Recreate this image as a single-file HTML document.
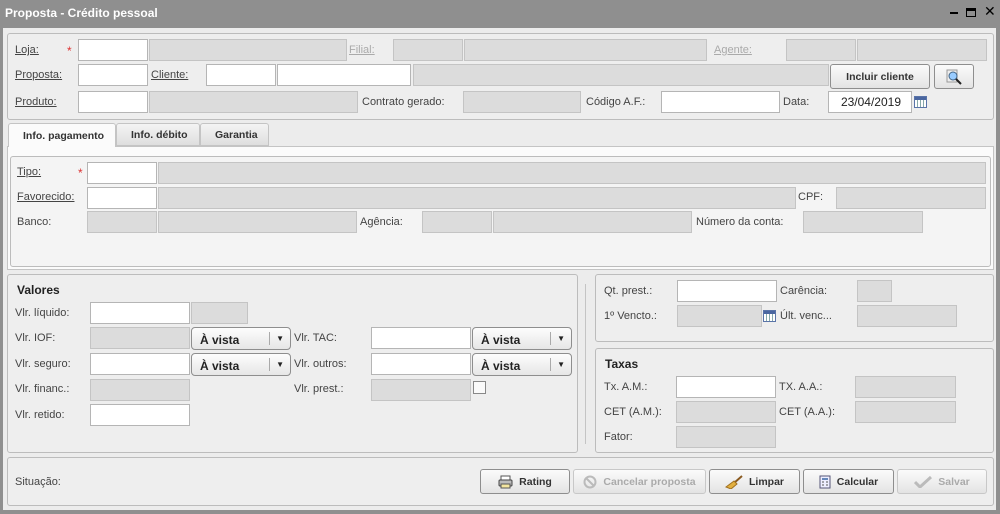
<!DOCTYPE html>
<html><head><meta charset="utf-8"><style>
*{box-sizing:border-box;margin:0;padding:0}
body{width:1000px;height:514px;background:#8f8f8f;font-family:"Liberation Sans",sans-serif;font-size:11px;color:#444;position:relative;overflow:hidden}
.a{position:absolute}
#win{position:absolute;left:3px;top:28px;width:993px;height:482px;background:#ececec}
.pn{position:absolute;border:1px solid #bcbcbc;border-radius:3px;background:#eeeeee}
.w{position:absolute;background:#fff;border:1px solid #b5b5b5;height:22px}
.g{position:absolute;background:#dcdcdc;border:1px solid #c4c4c4;height:22px}
.l{position:absolute;line-height:14px;white-space:nowrap}
.u{text-decoration:underline}
.dis{color:#aaa}
.st{position:absolute;color:#d33;font-size:12px}
.btn{position:absolute;height:25px;border:1px solid #8e8e8e;border-radius:3px;background:linear-gradient(#fbfbfb,#e3e3e3);font-weight:bold;font-size:10.5px;color:#333;display:flex;align-items:center;justify-content:center;gap:6px}
.btn.d{color:#aaa;border-color:#c8c8c8}
.sel{position:absolute;width:100px;height:23px;border:1px solid #8e8e8e;border-radius:4px;background:linear-gradient(#fdfdfd,#e6e6e6);font-weight:bold;font-size:12px;color:#222;padding:5px 8px}
.sel:after{content:"▼";position:absolute;right:6px;top:6px;font-size:8px}
.sel:before{content:"";position:absolute;right:20px;top:4px;height:13px;border-left:1px solid #aaa}
.cal{position:absolute;width:13px;height:12px;border:1px solid #5a74a8;background:repeating-linear-gradient(90deg,#fff 0 2px,#8aa 2px 3px),#fff}
.cal:before{content:"";position:absolute;left:0;top:0;right:0;height:3px;background:#4a66a0}
</style></head><body>
<div class="a" style="left:5px;top:6px;color:#fff;font-weight:bold;font-size:12px">Proposta - Crédito pessoal</div>
<div class="a" style="left:950px;top:12px;width:8px;height:2px;background:#000"></div>
<div class="a" style="left:966px;top:8px;width:10px;height:9px;border:1px solid #000;border-top-width:3px"></div>
<div class="a" style="left:984px;top:3px;font-size:14px;color:#000">✕</div>
<div id="win"></div>

<div class="pn" style="left:7px;top:33px;width:987px;height:87px"></div>
<div class="l u" style="left:15px;top:43px">Loja:</div><div class="st" style="left:67px;top:44px">*</div>
<div class="w" style="left:78px;top:39px;width:70px"></div><div class="g" style="left:149px;top:39px;width:198px"></div>
<div class="l u dis" style="left:349px;top:43px">Filial:</div>
<div class="g" style="left:393px;top:39px;width:70px"></div><div class="g" style="left:464px;top:39px;width:243px"></div>
<div class="l u dis" style="left:714px;top:43px">Agente:</div>
<div class="g" style="left:786px;top:39px;width:70px"></div><div class="g" style="left:857px;top:39px;width:130px"></div>

<div class="l u" style="left:15px;top:68px">Proposta:</div>
<div class="w" style="left:78px;top:64px;width:70px"></div>
<div class="l u" style="left:151px;top:68px">Cliente:</div>
<div class="w" style="left:206px;top:64px;width:70px"></div><div class="w" style="left:277px;top:64px;width:134px"></div>
<div class="g" style="left:413px;top:64px;width:416px"></div>
<div class="btn" style="left:830px;top:64px;width:100px">Incluir cliente</div>
<div class="btn" style="left:934px;top:64px;width:40px"><svg width="16" height="16"><rect x="1" y="1" width="10" height="12" fill="#eee" stroke="#999"/><circle cx="7" cy="7" r="4" fill="#9cf" stroke="#468"/><path d="M10 10l5 5" stroke="#222" stroke-width="2"/></svg></div>

<div class="l u" style="left:15px;top:95px">Produto:</div>
<div class="w" style="left:78px;top:91px;width:70px"></div><div class="g" style="left:149px;top:91px;width:209px"></div>
<div class="l" style="left:362px;top:95px">Contrato gerado:</div>
<div class="g" style="left:463px;top:91px;width:118px"></div>
<div class="l" style="left:586px;top:95px">Código A.F.:</div>
<div class="w" style="left:661px;top:91px;width:119px"></div>
<div class="l" style="left:783px;top:95px">Data:</div>
<div class="w" style="left:828px;top:91px;width:84px;text-align:right;padding:3px 10px 0 0;color:#222;font-size:12px">23/04/2019</div>
<div class="cal" style="left:914px;top:96px"></div>

<div class="a" style="left:7px;top:146px;width:987px;height:124px;background:#fbfbfb;border:1px solid #c4c4c4"></div>
<div class="a" style="left:8px;top:123px;width:108px;height:24px;background:#fbfbfb;border:1px solid #c4c4c4;border-bottom:none;border-radius:3px 3px 0 0;font-weight:bold;font-size:10.5px;color:#333;padding:6px 0 0 14px">Info. pagamento</div>
<div class="a" style="left:116px;top:123px;width:84px;height:23px;background:linear-gradient(#f4f4f4,#dedede);border:1px solid #c4c4c4;border-radius:3px 3px 0 0;font-weight:bold;font-size:10.5px;color:#333;padding:5px 0 0 14px">Info. débito</div>
<div class="a" style="left:200px;top:123px;width:69px;height:23px;background:linear-gradient(#f4f4f4,#dedede);border:1px solid #c4c4c4;border-radius:3px 3px 0 0;font-weight:bold;font-size:10.5px;color:#333;padding:5px 0 0 14px">Garantia</div>
<div class="pn" style="left:10px;top:156px;width:981px;height:111px;background:#f4f4f4"></div>
<div class="l u" style="left:17px;top:165px">Tipo:</div><div class="st" style="left:78px;top:166px">*</div>
<div class="w" style="left:87px;top:162px;width:70px"></div><div class="g" style="left:158px;top:162px;width:828px"></div>
<div class="l u" style="left:17px;top:190px">Favorecido:</div>
<div class="w" style="left:87px;top:187px;width:70px"></div><div class="g" style="left:158px;top:187px;width:638px"></div>
<div class="l" style="left:798px;top:190px">CPF:</div><div class="g" style="left:836px;top:187px;width:150px"></div>
<div class="l" style="left:17px;top:215px">Banco:</div>
<div class="g" style="left:87px;top:211px;width:70px"></div><div class="g" style="left:158px;top:211px;width:199px"></div>
<div class="l" style="left:360px;top:215px">Agência:</div>
<div class="g" style="left:422px;top:211px;width:70px"></div><div class="g" style="left:493px;top:211px;width:199px"></div>
<div class="l" style="left:696px;top:215px">Número da conta:</div><div class="g" style="left:803px;top:211px;width:120px"></div>

<div class="pn" style="left:7px;top:274px;width:571px;height:179px"></div>
<div class="l" style="left:17px;top:283px;font-weight:bold;font-size:12px;color:#222">Valores</div>
<div class="l" style="left:15px;top:306px">Vlr. líquido:</div>
<div class="w" style="left:90px;top:302px;width:100px"></div><div class="g" style="left:191px;top:302px;width:57px"></div>
<div class="l" style="left:15px;top:331px">Vlr. IOF:</div>
<div class="g" style="left:90px;top:327px;width:100px"></div><div class="sel" style="left:191px;top:327px">À vista</div>
<div class="l" style="left:294px;top:331px">Vlr. TAC:</div>
<div class="w" style="left:371px;top:327px;width:100px"></div><div class="sel" style="left:472px;top:327px">À vista</div>
<div class="l" style="left:15px;top:357px">Vlr. seguro:</div>
<div class="w" style="left:90px;top:353px;width:100px"></div><div class="sel" style="left:191px;top:353px">À vista</div>
<div class="l" style="left:294px;top:357px">Vlr. outros:</div>
<div class="w" style="left:371px;top:353px;width:100px"></div><div class="sel" style="left:472px;top:353px">À vista</div>
<div class="l" style="left:15px;top:382px">Vlr. financ.:</div>
<div class="g" style="left:90px;top:379px;width:100px"></div>
<div class="l" style="left:294px;top:382px">Vlr. prest.:</div>
<div class="g" style="left:371px;top:379px;width:100px"></div>
<div class="a" style="left:473px;top:381px;width:13px;height:13px;border:1px solid #888;background:#fafafa"></div>
<div class="l" style="left:15px;top:408px">Vlr. retido:</div>
<div class="w" style="left:90px;top:404px;width:100px"></div>
<div class="a" style="left:585px;top:284px;width:1px;height:160px;background:#c4c4c4"></div>

<div class="pn" style="left:595px;top:274px;width:399px;height:68px"></div>
<div class="l" style="left:604px;top:284px">Qt. prest.:</div><div class="w" style="left:677px;top:280px;width:100px"></div>
<div class="l" style="left:780px;top:284px">Carência:</div><div class="g" style="left:857px;top:280px;width:35px"></div>
<div class="l" style="left:604px;top:309px">1º Vencto.:</div><div class="g" style="left:677px;top:305px;width:85px"></div>
<div class="cal" style="left:763px;top:310px"></div>
<div class="l" style="left:780px;top:309px">Últ. venc...</div><div class="g" style="left:857px;top:305px;width:100px"></div>

<div class="pn" style="left:595px;top:348px;width:399px;height:105px"></div>
<div class="l" style="left:605px;top:357px;font-weight:bold;font-size:12px;color:#222">Taxas</div>
<div class="l" style="left:604px;top:380px">Tx. A.M.:</div><div class="w" style="left:676px;top:376px;width:100px"></div>
<div class="l" style="left:779px;top:380px">TX. A.A.:</div><div class="g" style="left:855px;top:376px;width:101px"></div>
<div class="l" style="left:604px;top:405px">CET (A.M.):</div><div class="g" style="left:676px;top:401px;width:100px"></div>
<div class="l" style="left:779px;top:405px">CET (A.A.):</div><div class="g" style="left:855px;top:401px;width:101px"></div>
<div class="l" style="left:604px;top:430px">Fator:</div><div class="g" style="left:676px;top:426px;width:100px"></div>

<div class="pn" style="left:7px;top:457px;width:987px;height:49px"></div>
<div class="l" style="left:15px;top:475px">Situação:</div>
<div class="btn" style="left:480px;top:469px;width:90px"><svg width="15" height="14"><rect x="3" y="1" width="9" height="4" fill="#fff" stroke="#555"/><rect x="1" y="5" width="13" height="6" rx="1" fill="#bbb" stroke="#444"/><rect x="3" y="9" width="9" height="4" fill="#f4e6a0" stroke="#555"/></svg>Rating</div>
<div class="btn d" style="left:573px;top:469px;width:133px"><svg width="14" height="14"><circle cx="7" cy="7" r="5.5" fill="none" stroke="#bbb" stroke-width="2"/><path d="M3 3l8 8" stroke="#bbb" stroke-width="2"/></svg>Cancelar proposta</div>
<div class="btn" style="left:709px;top:469px;width:91px"><svg width="18" height="14"><path d="M17 1L9 8" stroke="#8a5a20" stroke-width="2"/><path d="M9 6l3 3-6 5-5-2z" fill="#e2b040" stroke="#a07020"/></svg>Limpar</div>
<div class="btn" style="left:803px;top:469px;width:91px"><svg width="12" height="14"><rect x="1" y="1" width="10" height="12" fill="#eef" stroke="#557"/><rect x="3" y="3" width="6" height="2" fill="#6688bb"/><path d="M3 7h2M7 7h2M3 10h2M7 10h2" stroke="#555"/></svg>Calcular</div>
<div class="btn d" style="left:897px;top:469px;width:90px"><svg width="18" height="12"><path d="M1 6l5 5L17 1" fill="none" stroke="#bbb" stroke-width="3"/></svg>Salvar</div>
</body></html>
